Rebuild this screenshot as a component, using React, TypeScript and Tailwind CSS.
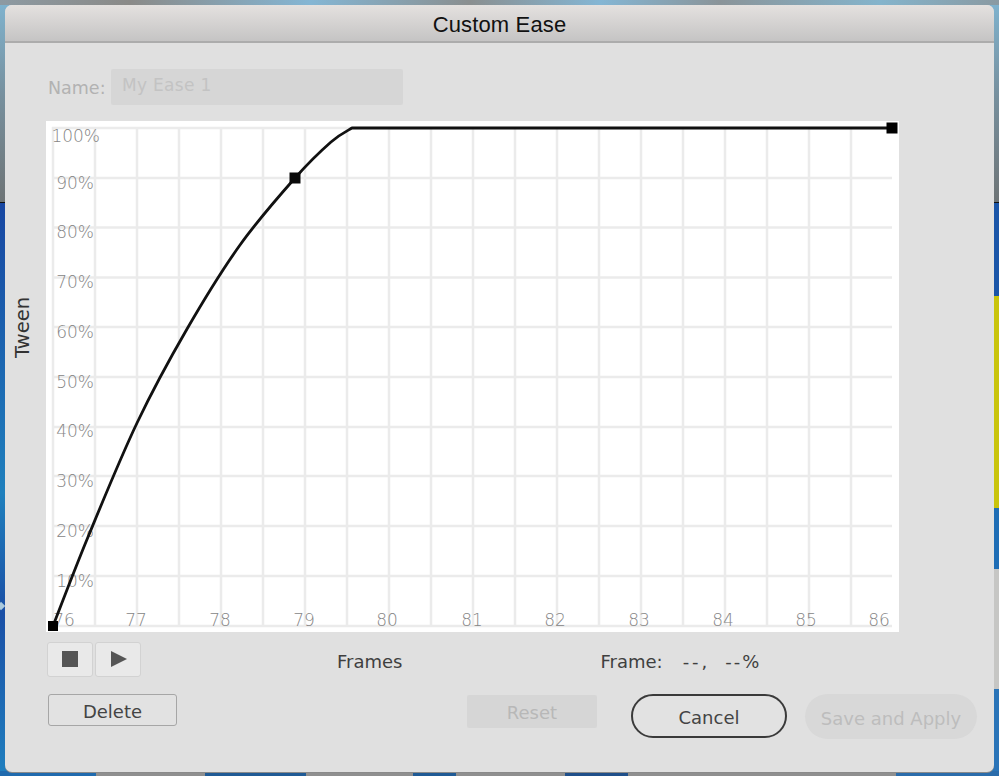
import React from "react";

const uiFont = "[font-family:'DejaVu_Sans',sans-serif]";

const vLines = Array.from({ length: 20 }, (_, i) => 53 + i * 42);
const hLines = [128, 178, 227.5, 277.5, 327, 377, 427, 476, 526, 576, 626];
const yLabels = [
  ["100%", 100, 142],
  ["90%", 94, 189],
  ["80%", 94, 238],
  ["70%", 94, 288],
  ["60%", 94, 338],
  ["50%", 94, 388],
  ["40%", 94, 437],
  ["30%", 94, 487],
  ["20%", 94, 537],
  ["10%", 94, 587],
] as const;
const xLabels = [
  ["76", 64],
  ["77", 136],
  ["78", 220],
  ["79", 304],
  ["80", 387],
  ["81", 472],
  ["82", 555],
  ["83", 639],
  ["84", 723],
  ["85", 806],
  ["86", 879],
] as const;

// points read off the curve, smoothed into cubics below
const curvePoints = [
  [53, 626],
  [88, 537],
  [137, 423],
  [187, 329],
  [240, 245],
  [295, 178],
  [331, 142],
  [352, 128],
];

const smoothPath = (pts: number[][]) => {
  let d = `M${pts[0][0]} ${pts[0][1]}`;
  for (let i = 0; i < pts.length - 1; i++) {
    const p0 = pts[Math.max(i - 1, 0)];
    const p1 = pts[i];
    const p2 = pts[i + 1];
    const p3 = pts[Math.min(i + 2, pts.length - 1)];
    const c1x = p1[0] + (p2[0] - p0[0]) / 6;
    const c1y = p1[1] + (p2[1] - p0[1]) / 6;
    const c2x = p2[0] - (p3[0] - p1[0]) / 6;
    const c2y = p2[1] - (p3[1] - p1[1]) / 6;
    d += ` C${c1x} ${c1y} ${c2x} ${c2y} ${p2[0]} ${p2[1]}`;
  }
  return d + " L892 128";
};

const EaseChart = () => (
  <svg viewBox="46 121 853 511" className="block w-[853px] h-[511px] bg-white">
    {vLines.map((x) => (
      <line key={x} x1={x} x2={x} y1={127} y2={627} stroke="#ebebeb" strokeWidth={2.5} />
    ))}
    {hLines.map((y) => (
      <line key={y} x1={52} x2={892} y1={y} y2={y} stroke="#ebebeb" strokeWidth={2.5} />
    ))}
    <g fill="#858585" fontFamily="'DejaVu Sans', sans-serif" fontWeight={200} fontSize={17}>
      {yLabels.map(([t, x, y]) => (
        <text key={t} x={x} y={y} textAnchor="end">
          {t}
        </text>
      ))}
      {xLabels.map(([t, x]) => (
        <text key={t} x={x} y={626} textAnchor="middle">
          {t}
        </text>
      ))}
    </g>
    <path d={smoothPath(curvePoints)} fill="none" stroke="#111" strokeWidth={2.8} strokeLinejoin="round" />
    <rect x={48} y={621} width={10} height={10} fill="#000" />
    <rect x={289.5} y={172.5} width={11} height={11} fill="#0a0a0a" />
    <rect x={886.5} y={122.5} width={11} height={11} fill="#000" />
  </svg>
);

const App = () => {
  return (
    <div className={`relative w-[999px] h-[776px] overflow-hidden ${uiFont}`}>
      {/* desktop behind the dialog */}
      <div className="h-[5px] bg-[linear-gradient(90deg,#8d9aa2_0,#8a8a88_130px,#84b6d4_310px,#8a8f90_470px,#84b6d4_600px,#8a9499_720px,#84b4cc_880px,#8a9aa2_999px)]" />
      <div className="h-[197px] bg-[linear-gradient(180deg,#7fb2cd_0,#77909e_90px,#6e7476_197px)]" />
      <div className="h-px bg-[#111]" />
      <div className="h-[573px] bg-[linear-gradient(180deg,#1847a2_0,#1f80bd_290px,#1a4fa6_410px,#2080bf_573px)]" />
      <div className="absolute left-[-2px] top-[603px] size-[6px] rotate-45 bg-[#a9c9de]" />

      <div className="absolute right-0 top-[203px] h-[93px] w-[6px] bg-[#1a55a8]" />
      <div className="absolute right-0 top-[296px] h-[212px] w-[6px] bg-[#c9c40c]" />
      <div className="absolute right-0 top-[508px] h-[61px] w-[6px] bg-[#1e6db5]" />
      <div className="absolute right-0 top-[569px] h-[120px] w-[6px] bg-[#c6c6c4]" />
      <div className="absolute right-0 top-[689px] h-[87px] w-[6px] bg-[#2a74b8]" />

      <div className="absolute left-0 bottom-0 flex h-[5px] w-full">
        <div className="w-[96px] bg-[#1f6aae]" />
        <div className="w-[109px] bg-[#8f8f8f]" />
        <div className="w-[101px] bg-[#1f5a95]" />
        <div className="w-[107px] bg-[#8f8f8f]" />
        <div className="w-[43px] bg-[#1f5a95]" />
        <div className="w-[109px] bg-[#8f8f8f]" />
        <div className="w-[63px] bg-[#1f4f8a]" />
        <div className="w-[268px] bg-[#8f8f8f]" />
        <div className="flex-1 bg-[#2a6cab]" />
      </div>

      {/* dialog window */}
      <div className="absolute left-[5px] top-[5px] flex h-[767px] w-[989px] flex-col overflow-hidden rounded-[7px] bg-[#e0e0e0] shadow-[0_1px_0_#8a8a8a]">
        <div className="flex h-[38px] shrink-0 items-center justify-center border-b-2 border-[#acacac] bg-[linear-gradient(180deg,#e4e1df,#c5c4c4)]">
          <span className="relative top-[1px] [font-family:'Liberation_Sans',sans-serif] text-[22px] tracking-[0.15px] text-[#111]">
            Custom Ease
          </span>
        </div>

        <div className="ml-[43px] mt-[26px] flex h-[36px] items-center gap-[6px]">
          <span className="w-[57px] pt-[3px] text-[17.5px] text-[#b2b2b2]">Name:</span>
          <div className="flex h-[36px] w-[292px] items-center rounded-[2px] bg-[#d6d6d6] pb-[2px] pl-[11px] text-[17px] tracking-[0.3px] text-[#c3c3c3]">
            My Ease 1
          </div>
        </div>

        <div className="mt-[16px] flex items-start">
          <div className="flex w-[35px] justify-center pt-[176px] mr-[6px]">
            <span className="rotate-180 text-[19.5px] leading-[24px] text-[#333] [writing-mode:vertical-rl]">Tween</span>
          </div>
          <EaseChart />
        </div>

        <div className="ml-[42px] mt-[10px] flex h-[34px] items-center text-[18px] text-[#3f3f3f]">
          <div className="flex gap-[2px]">
            <button className="flex h-[35px] w-[46px] items-center justify-center rounded-[3px] border border-[#d2d2d2] bg-[#e9e9e9]">
              <svg width="16" height="16" viewBox="0 0 16 16">
                <rect width="16" height="16" fill="#555" />
              </svg>
            </button>
            <button className="flex h-[35px] w-[46px] items-center justify-center rounded-[3px] border border-[#d2d2d2] bg-[#e9e9e9] pl-[2px]">
              <svg width="16" height="16" viewBox="0 0 16 16">
                <path d="M0 0 L16 8 L0 16 Z" fill="#555" />
              </svg>
            </button>
          </div>
          <span className="ml-[196px] pt-[5px]">Frames</span>
          <span className="ml-[198px] pt-[5px]">Frame:</span>
          <span className="ml-[20px] pt-[5px] tracking-[3px]">--,</span>
          <span className="ml-[15px] pt-[5px] tracking-[2px]">--%</span>
        </div>

        <div className="ml-[43px] mt-[18px] flex items-start text-[18px]">
          <button className="flex h-[32px] w-[129px] items-center justify-center rounded-[3px] border border-[#a6a6a6] bg-[#e2e2e2] pt-[2px] text-[#444]">
            Delete
          </button>
          <button className="ml-[290px] mt-[1px] flex h-[33px] w-[130px] items-center justify-center rounded-[2px] bg-[#d6d6d6] pt-[2px] text-[#b8b8b8]">
            Reset
          </button>
          <button className="ml-[34px] flex h-[44px] w-[156px] items-center justify-center rounded-full border-2 border-[#3a3a3a] bg-[#e2e2e2] pt-[3px] text-[#444]">
            Cancel
          </button>
          <button className="ml-[18px] flex h-[45px] w-[172px] items-center justify-center rounded-full bg-[#d8d8d8] pt-[3px] text-[#bdbdbd]">
            Save and Apply
          </button>
        </div>
      </div>
    </div>
  );
};

export default App;
